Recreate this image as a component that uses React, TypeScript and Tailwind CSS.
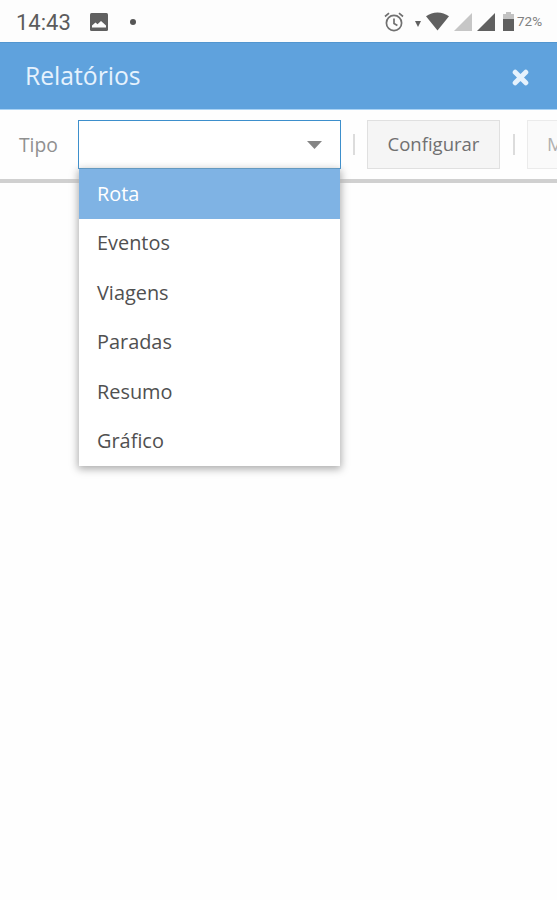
import React, { useState } from 'react';

const reportTypes = ['Rota', 'Eventos', 'Viagens', 'Paradas', 'Resumo', 'Gráfico'];

const StatusBar: React.FC = () => (
  <div className="flex h-[42px] shrink-0 items-center bg-[#fdfdfd] pt-[2px] font-['Roboto',sans-serif] text-[#5c5c5c]">
    <span className="ml-[16px] w-[56px] whitespace-nowrap pt-[1px] text-[22px] leading-none">14:43</span>
    <svg className="ml-[18px]" width="18" height="18" viewBox="0 0 18 18">
      <rect width="18" height="18" rx="1.5" fill="#606060" />
      <path d="M2 14.5v-2l3.5-3 2 1.7L11 8l5 4.5v2z" fill="#fdfdfd" />
    </svg>
    <span className="ml-[22px] h-[6px] w-[6px] rounded-full bg-[#555]" />

    <div className="ml-auto flex items-center">
      {/* Alarm */}
      <svg width="20" height="20" viewBox="0 0 20 20" fill="none" stroke="#707070" strokeWidth="1.7">
        <circle cx="10" cy="11" r="7.6" />
        <path d="M10 6.5v5l3.4 2M1 4.5l4-3.3M19 4.5l-4-3.3" />
      </svg>
      <svg className="ml-[11px] mt-[3px]" width="6" height="6" viewBox="0 0 6 6">
        <path d="M0 0h6L3 6z" fill="#606060" />
      </svg>
      {/* Wifi */}
      <svg className="ml-[5px] mb-[2px]" width="23" height="19" viewBox="0 0 24 19">
        <path d="M0 4C7-1.3 17-1.3 24 4L12 19z" fill="#606060" />
      </svg>
      <svg className="ml-[5px]" width="18" height="18" viewBox="0 0 18 18">
        <path d="M18 0v18H0z" fill="#c6c6c6" />
      </svg>
      <svg className="ml-[5px]" width="18" height="18" viewBox="0 0 18 18">
        <path d="M18 0v18H0z" fill="#606060" />
      </svg>
      {/* Battery */}
      <svg className="ml-[8px] mb-[1px]" width="11" height="19" viewBox="0 0 11 19">
        <path d="M3 0h5v2h3v5H0V2h3z" fill="#c2c2c2" />
        <path d="M0 7h11v12H0z" fill="#606060" />
      </svg>
      <span className="ml-[3px] mr-[14px] w-[26px] whitespace-nowrap text-[13.5px] leading-none text-[#808080]">72%</span>
    </div>
  </div>
);

const Separator: React.FC = () => <span className="h-[21px] w-[2px] shrink-0 bg-[#dcdcdc]" />;

export default function App() {
  const [selected, setSelected] = useState('Rota');

  return (
    <div className="flex h-[900px] w-[557px] flex-col overflow-hidden bg-[#fefefe] font-['Open_Sans',sans-serif]">
      <StatusBar />

      <header className="flex h-[68px] shrink-0 items-center justify-between border-y border-t-[#5296d0] border-b-[#a9d3f5] bg-[#5fa2dd] pl-[25px] pr-[28px]">
        <h1 className="text-[24.7px] leading-none text-[#e6f2fd]">Relatórios</h1>
        <button aria-label="Fechar" className="mt-[3px]">
          <svg width="17" height="17" viewBox="0 0 17 17">
            <path d="M3.2 3.2l10.6 10.6M13.8 3.2L3.2 13.8" stroke="#e6f2fd" strokeWidth="5" strokeLinecap="round" />
          </svg>
        </button>
      </header>

      <div className="flex h-[73px] shrink-0 items-start border-b-4 border-[#d0d0d0] pt-[10px] text-[19.9px] leading-none">
        <label className="ml-[19px] flex h-[49px] w-[59px] shrink-0 items-center text-[19.3px] text-[#909090]">Tipo</label>

        <div className="relative w-[263px] shrink-0">
          <button className="flex h-[49px] w-full items-center justify-end border-[1.5px] border-[#3d8fcc] bg-white pr-[18px]">
            <svg width="15" height="8" viewBox="0 0 15 8">
              <path d="M0 0h15L7.5 8z" fill="#858585" />
            </svg>
          </button>
          <ul className="absolute left-[1px] top-[49px] w-[261px] bg-white shadow-[0_2px_8px_1px_#aaa]">
            {reportTypes.map(type => (
              <li
                key={type}
                onClick={() => setSelected(type)}
                className={`flex h-[49.5px] items-center pl-[18px] ${type === selected ? 'bg-[#7fb3e4] text-white' : 'text-[#505050]'}`}
              >
                {type}
              </li>
            ))}
          </ul>
        </div>

        <div className="ml-[12px] flex h-[49px] shrink-0 items-center text-[18.5px]">
          <Separator />
          <button className="ml-[12px] mr-[13px] h-[49px] w-[133px] border border-[#e0e0e0] bg-[#f5f5f5] text-[#707070]">Configurar</button>
          <Separator />
          <button className="ml-[12px] h-[49px] w-[133px] border border-[#ebebeb] bg-[#fafafa] pl-[19px] text-left text-[#b0b0b0]">Mostrar</button>
        </div>
      </div>
    </div>
  );
}
